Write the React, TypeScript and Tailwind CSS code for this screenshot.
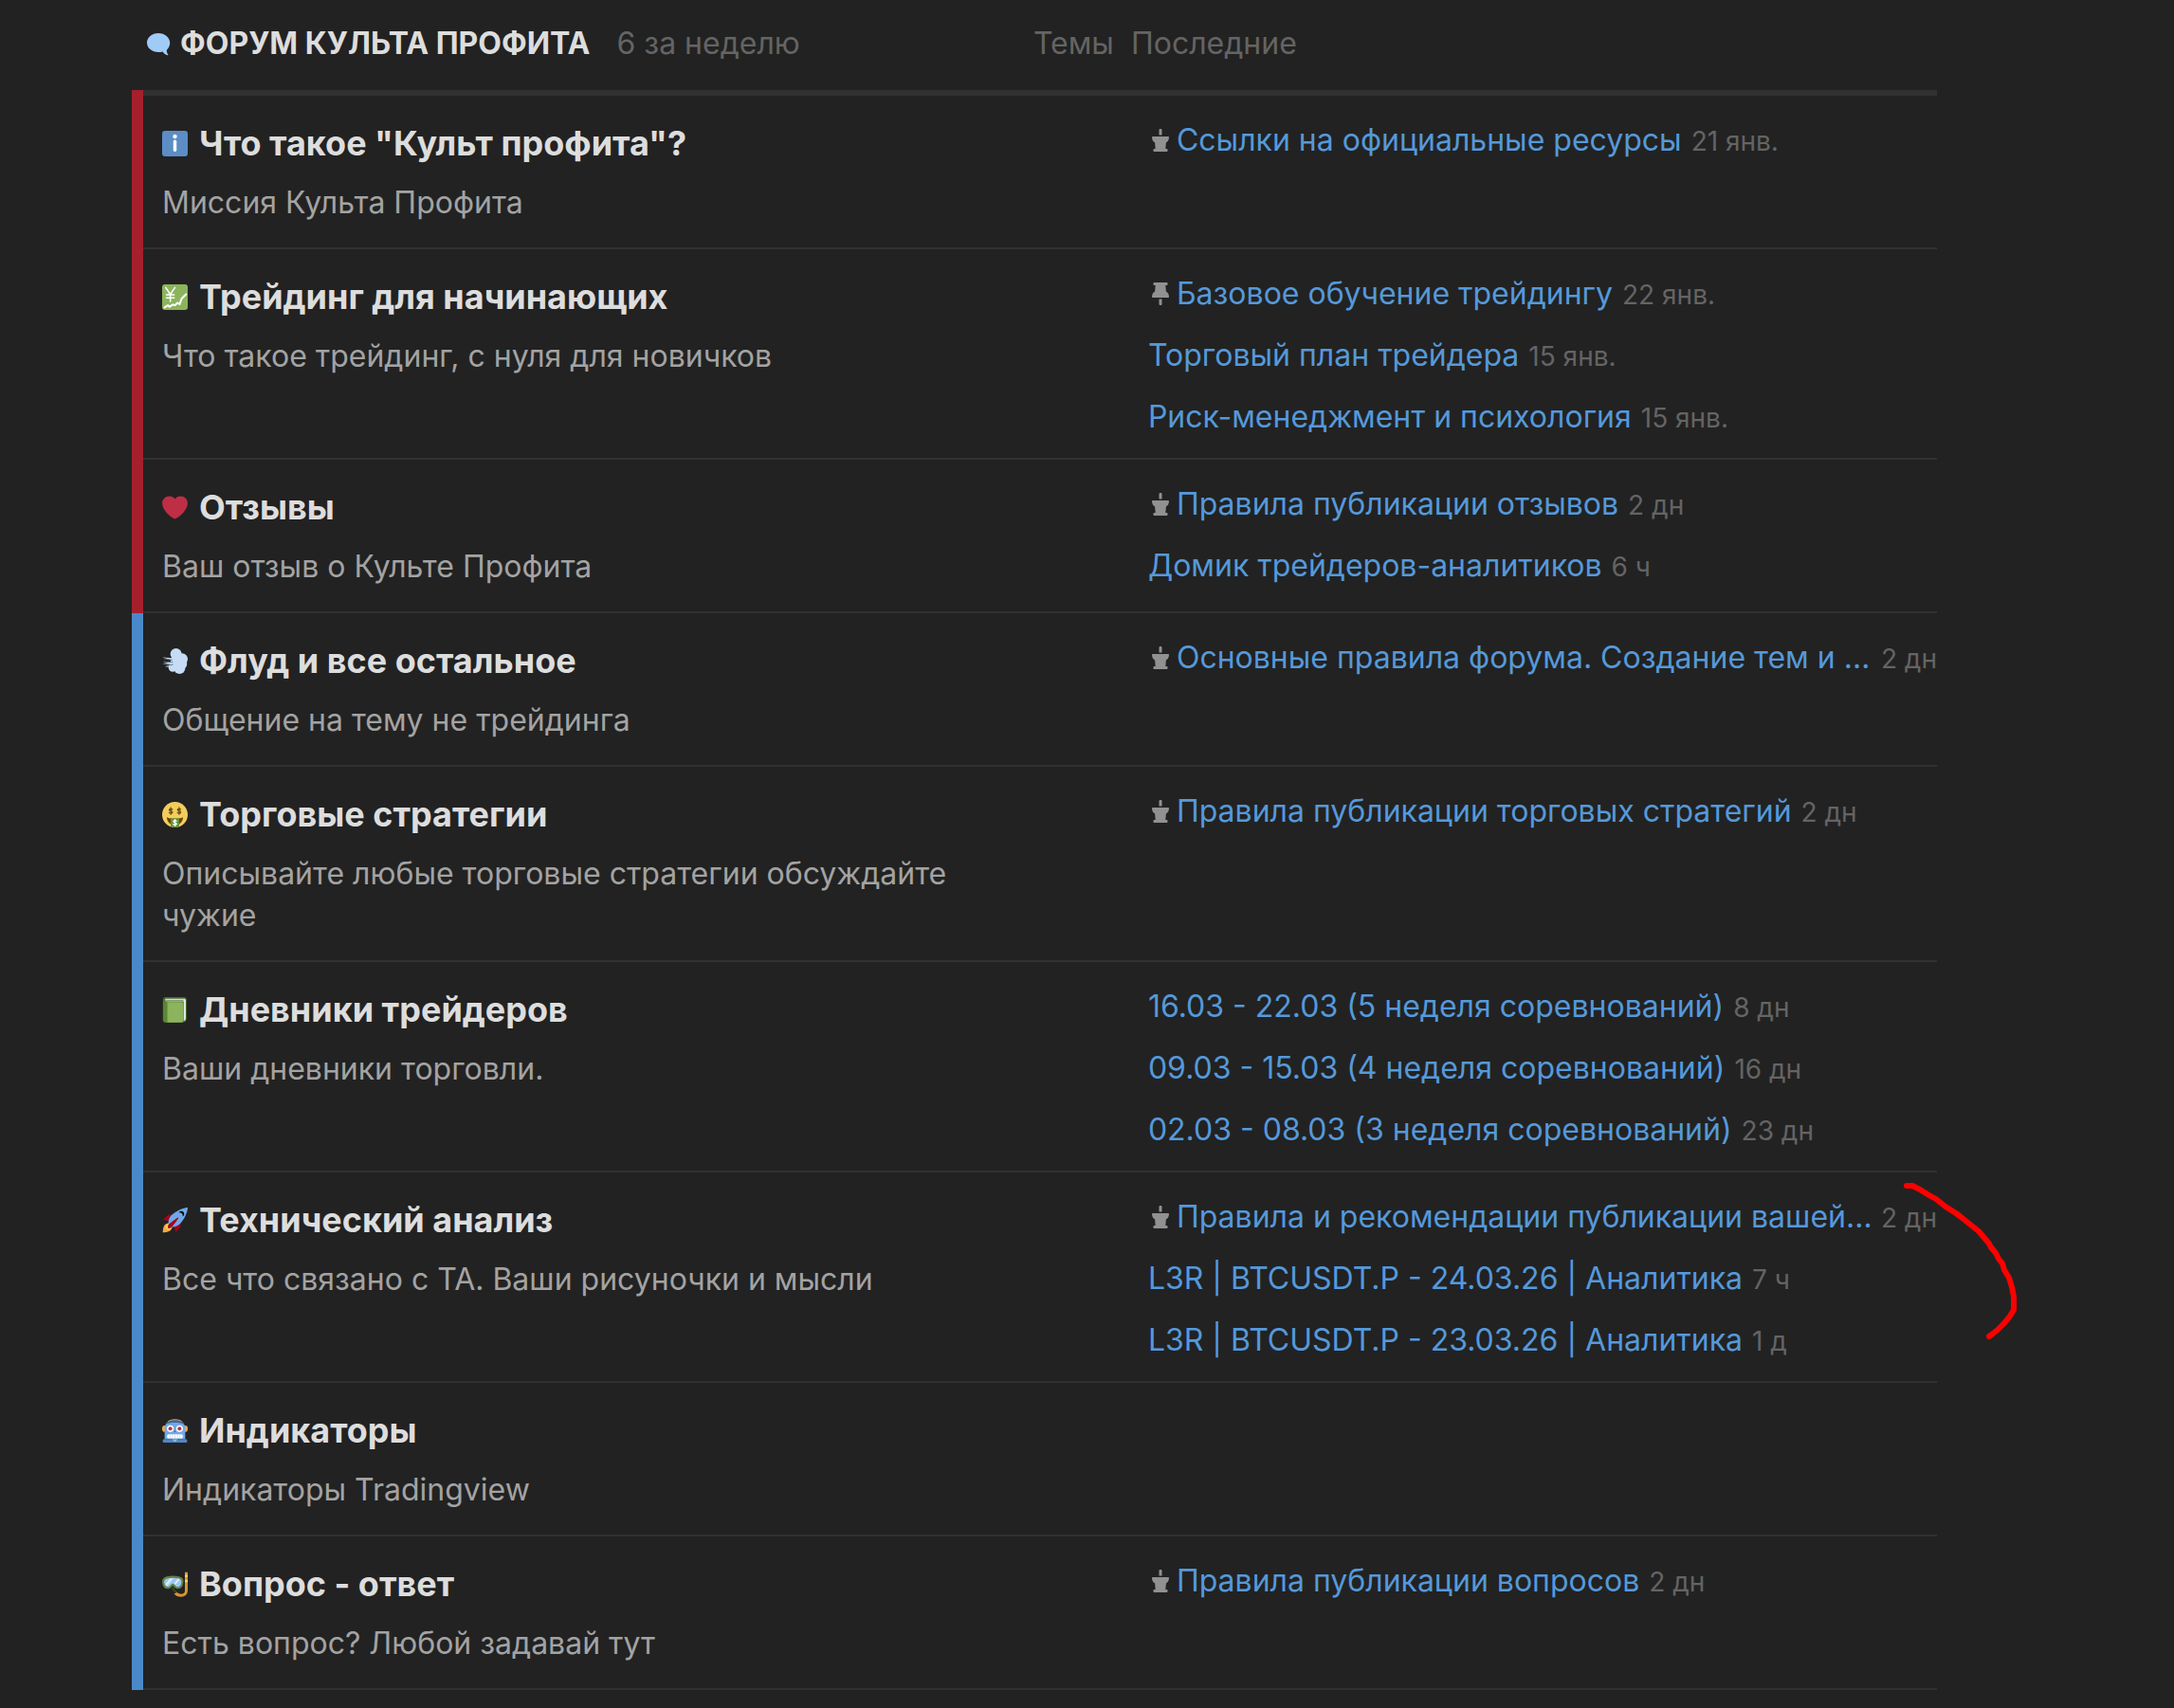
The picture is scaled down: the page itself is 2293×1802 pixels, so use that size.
import type { ReactNode } from "react";

type Topic = { title: string; date: string; pin?: "up" | "down"; clipped?: boolean };
type Category = {
  name: string;
  icon: ReactNode;
  description: string;
  topics: Topic[];
  marked?: boolean;
};
type Group = { color: string; categories: Category[] };

function Emoji({ children }: { children: ReactNode }) {
  return (
    <svg viewBox="0 0 36 36" className="size-[27px] shrink-0" aria-hidden="true">
      {children}
    </svg>
  );
}

const bubble = (
  <Emoji>
    <path
      fill="#9fcbf6"
      d="M16 2.500C7 2.500 0 8.500 0 16s7 13.300 16 13.300c2 0 4-.3 5.800-.8 2 2.600 4.400 4.400 7.200 5.200.8.200 1.200-.6.700-1.200-1.400-1.900-2-4-1.900-6.300C30.800 23.700 32.300 20 32.300 16 32.300 8.500 25 2.500 16 2.500z"
    />
  </Emoji>
);

const info = (
  <Emoji>
    <rect width="36" height="36" rx="4" fill="#5c8dc5" />
    <circle cx="18" cy="8" r="2.900" fill="#fff" />
    <rect x="15.700" y="12.800" width="4.600" height="16.500" rx="2.200" fill="#fff" />
  </Emoji>
);

const yenChart = (
  <Emoji>
    <rect width="36" height="36" rx="4" fill="#8cb45c" />
    <g fill="none" stroke="#fff" strokeLinecap="round" strokeLinejoin="round">
      <path strokeWidth="2" d="M5 4.500 11.500 14 18 4.500M11.500 14v10M6 14.500h11M6 19h11" />
      <path strokeWidth="2.800" d="M3.500 32.500 8 29.500l2.500 2 4.500-3 3 1 3.500-3.500 3 2 3-8 6-6" />
    </g>
  </Emoji>
);

const heart = (
  <Emoji>
    <path
      fill="#be2f45"
      d="M35.885 11.833c0-5.450-4.418-9.868-9.867-9.868-3.308 0-6.227 1.633-8.018 4.129-1.791-2.496-4.710-4.129-8.017-4.129-5.450 0-9.868 4.417-9.868 9.868 0 .772.098 1.520.266 2.241C1.751 22.587 11.216 31.568 18 34.034c6.783-2.466 16.249-11.447 17.617-19.959.170-.721.268-1.469.268-2.242z"
    />
  </Emoji>
);

const puff = (
  <Emoji>
    <g fill="#c5dcf4">
      <circle cx="19.500" cy="8" r="8" />
      <circle cx="28" cy="15" r="8" />
      <circle cx="24.500" cy="28" r="8" />
      <circle cx="15" cy="27" r="6" />
      <circle cx="20" cy="18" r="8" />
      <circle cx="28" cy="22" r="7" />
      <path d="M.3 12.500l14 1v3.500zM.5 21.500 14 18.500v4zM4 25.500l10-3v4z" />
    </g>
    <g fill="none" stroke="#66788a" strokeWidth="1.200" strokeLinecap="round">
      <path d="M3 14.500 14 16.500M2.500 19l12 .500M6 24.500l9-1.500" />
    </g>
  </Emoji>
);

const moneyFace = (
  <Emoji>
    <circle cx="18" cy="18" r="18" fill="#f3cd5c" />
    <path fill="#664500" d="M6.500 21.500C10 23 14 23.500 18 23.500s8-.5 11.500-2c-.5 6-5 11.500-11.500 11.500S7 27.500 6.500 21.500z" />
    <path fill="#68903f" d="M12 23h12v10.500c0 1.300-3 2.500-6 2.500s-6-1.200-6-2.500z" />
    <g fill="none" strokeLinecap="round">
      <g stroke="#6b4a0c" strokeWidth="1.700">
        <path d="M14.300 10.500c-.6-1-4.300-1.300-4.300.8s4.500 1.200 4.500 3.200-3.900 1.900-4.700.5M12.200 8v9.500" />
        <path d="M26 10.500c-.6-1-4.300-1.300-4.300.8s4.500 1.200 4.500 3.200-3.900 1.900-4.700.5M23.900 8v9.500" />
      </g>
      <path
        stroke="#fff"
        strokeWidth="1.700"
        d="M20.200 27c-.6-1-4.300-1.300-4.300.8s4.500 1.200 4.500 3.200-3.900 1.900-4.700.5M18.100 24.800v9"
      />
    </g>
  </Emoji>
);

const greenBook = (
  <Emoji>
    <path fill="#4a6e28" d="M5 0h25.500c2.500 0 4 1.500 4 4v26c0 3-2 5.500-5 5.500H5c-2.500 0-4-1.500-4-4V4c0-2.500 1.500-4 4-4z" />
    <path fill="#dfe6ea" d="M5 2.200h26c1.500 0 2.300.8 2.300 2.300v25c0 2-1 3.500-3 4V6H6.500c-2.500 0-2.500-3.800-1.500-3.800z" />
    <path fill="#4a6e28" d="M5 3.800h25v1.500H5z" opacity=".6" />
    <path fill="#8cb45c" d="M7 7h20c1.800 0 2.800 1 2.800 2.800v23c0 1.700-1 2.700-2.800 2.700H7z" />
    <path fill="#5b8636" d="M1.500 5c.8 1.300 2.500 2 5.500 2v28.500H5c-2.200 0-3.500-1.400-3.500-3.500z" />
  </Emoji>
);

const rocket = (
  <Emoji>
    <path fill="#a0041e" d="M1 17l8-7 16 1 1 16-7 8s.001-5.999-6-12-12-6-12-6z" />
    <path fill="#f4aa41" d="M.973 35s-.036-7.979 2.985-11S15 21.187 15 21.187 14.999 29 11.999 32c-3 3-11.026 3-11.026 3z" />
    <circle cx="8.999" cy="27" r="4" fill="#fccc58" />
    <path fill="#6fa9ea" d="M35.999 0s-10 0-22 10c-6 5-6 14-4 16s11 2 16-4c10-12 10-22 10-22z" />
    <path d="M26.999 5c-1.623 0-3.013.971-3.641 2.360.502-.227 1.055-.360 1.641-.360 2.209 0 4 1.791 4 4 0 .586-.133 1.139-.359 1.640 1.389-.627 2.359-2.017 2.359-3.640 0-2.209-1.791-4-4-4z" />
    <path fill="#a0041e" d="M8 28.999s0-4 1-5 13.001-10.999 14-10-9.001 13-10.001 14S8 28.999 8 28.999z" />
  </Emoji>
);

const robot = (
  <Emoji>
    <ellipse cx="3" cy="15" rx="3" ry="4.500" fill="#f4aa41" />
    <ellipse cx="33" cy="15" rx="3" ry="4.500" fill="#f4aa41" />
    <path fill="#f4aa41" d="M7 6C9 3 13 1.800 18 1.800S27 3 29 6z" />
    <path fill="#6fa9ea" d="M3.500 14C3.500 8 9 3.500 18 3.500S32.500 8 32.500 14v16h-29z" />
    <path fill="#42699b" d="M8 5.200C11 3.600 14 3 18 3s7 .6 10 2.200c1.800 1 3 2.300 3.500 3.800C28 7.300 23 6.500 18 6.500S8 7.300 4.500 9C5 7.500 6.200 6.200 8 5.200z" />
    <rect x="1" y="30" width="34" height="4.500" rx="1" fill="#5585bf" />
    <circle cx="11.500" cy="15" r="4.700" fill="#fff" />
    <circle cx="24.500" cy="15" r="4.700" fill="#fff" />
    <circle cx="11.500" cy="15" r="2.700" fill="#be2f45" />
    <circle cx="24.500" cy="15" r="2.700" fill="#be2f45" />
    <path fill="#3f6fa9" d="M18 17l1.500 3h-3z" />
    <rect x="7" y="23" width="22" height="5.500" rx="2" fill="#fff" />
    <path stroke="#b9c6d4" strokeWidth=".8" d="M11 23v5.500M14.500 23v5.500M18 23v5.500M21.500 23v5.500M25 23v5.500" />
    <path fill="#8ebef2" d="M14 30h8l-4 3.500z" />
  </Emoji>
);

const mask = (
  <Emoji>
    <path fill="none" stroke="#d9952f" strokeWidth="4" d="M34 1v26c0 4-3 6.500-7.500 6.500-3.500 0-6-1-8-3.500" />
    <path stroke="#fad35f" strokeWidth="4" d="M34 4.500v3M34 11.500v3.500" />
    <path
      fill="#9cc6f2"
      stroke="#5f8443"
      strokeWidth="2.800"
      strokeLinejoin="round"
      d="M7 8.500C12 7.300 18 7.300 23.500 8.500c3.500.8 5.500 3.500 5 7-.5 4.500-3 7.500-7 7.500-3.500 0-4.200-4.500-6.500-4.500S12 23 8.500 23c-4 0-6.500-3-7-7.500-.4-3.500 2-6.200 5.500-7z"
    />
    <path fill="#d9ebfc" d="M11 9.800l4.500-.2-8 10.500-3-2zM22 10l3 .5-6 8-2-2z" />
    <path fill="#344426" d="M13 24l2.500-3 3 5.500 3 1-2 3c-3-1.500-5-3.500-6.500-6.500z" />
  </Emoji>
);

const groups: Group[] = [
  {
    color: "bg-[#a51f2d]",
    categories: [
      {
        name: 'Что такое "Культ профита"?',
        icon: info,
        description: "Миссия Культа Профита",
        topics: [{ title: "Ссылки на официальные ресурсы", date: "21 янв.", pin: "up" }],
      },
      {
        name: "Трейдинг для начинающих",
        icon: yenChart,
        description: "Что такое трейдинг, с нуля для новичков",
        topics: [
          { title: "Базовое обучение трейдингу", date: "22 янв.", pin: "down" },
          { title: "Торговый план трейдера", date: "15 янв." },
          { title: "Риск-менеджмент и психология", date: "15 янв." },
        ],
      },
      {
        name: "Отзывы",
        icon: heart,
        description: "Ваш отзыв о Культе Профита",
        topics: [
          { title: "Правила публикации отзывов", date: "2 дн", pin: "up" },
          { title: "Домик трейдеров-аналитиков", date: "6 ч" },
        ],
      },
    ],
  },
  {
    color: "bg-[#4a89c9]",
    categories: [
      {
        name: "Флуд и все остальное",
        icon: puff,
        description: "Общение на тему не трейдинга",
        topics: [{ title: "Основные правила форума. Создание тем и …", date: "2 дн", pin: "up", clipped: true }],
      },
      {
        name: "Торговые стратегии",
        icon: moneyFace,
        description: "Описывайте любые торговые стратегии обсуждайте чужие",
        topics: [{ title: "Правила публикации торговых стратегий", date: "2 дн", pin: "up" }],
      },
      {
        name: "Дневники трейдеров",
        icon: greenBook,
        description: "Ваши дневники торговли.",
        topics: [
          { title: "16.03 - 22.03 (5 неделя соревнований)", date: "8 дн" },
          { title: "09.03 - 15.03 (4 неделя соревнований)", date: "16 дн" },
          { title: "02.03 - 08.03 (3 неделя соревнований)", date: "23 дн" },
        ],
      },
      {
        name: "Технический анализ",
        icon: rocket,
        description: "Все что связано с ТА. Ваши рисуночки и мысли",
        marked: true,
        topics: [
          { title: "Правила и рекомендации публикации вашей…", date: "2 дн", pin: "up", clipped: true },
          { title: "L3R | BTCUSDT.P - 24.03.26 | Аналитика", date: "7 ч" },
          { title: "L3R | BTCUSDT.P - 23.03.26 | Аналитика", date: "1 д" },
        ],
      },
      {
        name: "Индикаторы",
        icon: robot,
        description: "Индикаторы Tradingview",
        topics: [],
      },
      {
        name: "Вопрос - ответ",
        icon: mask,
        description: "Есть вопрос? Любой задавай тут",
        topics: [{ title: "Правила публикации вопросов", date: "2 дн", pin: "up" }],
      },
    ],
  },
];

function Pin({ flipped }: { flipped: boolean }) {
  return (
    <svg
      viewBox="0 0 18 24"
      className={flipped ? "mr-2 ml-1 h-6 w-[18px] shrink-0 rotate-180" : "mr-2 ml-1 h-6 w-[18px] shrink-0"}
      aria-hidden="true"
    >
      <path
        fill="#919191"
        d="M2.500 0h13c.7 0 1 .5 1 1v1c0 .6-.4 1-1 1h-1.200l.6 6.500c1.800 1 3 2.800 3.100 5.500 0 .6-.4 1-1 1H1c-.6 0-1-.4-1-1 .1-2.700 1.300-4.500 3.100-5.500L3.700 3H2.500c-.6 0-1-.4-1-1V1c0-.5.3-1 1-1zM7.500 17.500h3V23c0 .5-.5 1-1.500 1s-1.500-.5-1.500-1z"
      />
    </svg>
  );
}

function TopicLine({ topic }: { topic: Topic }) {
  return (
    <li className="flex h-[65px] items-start whitespace-nowrap">
      <span className="flex h-11 items-center">{topic.pin && <Pin flipped={topic.pin === "up"} />}</span>
      <span className={topic.clipped ? "flex grow items-baseline justify-between" : "flex items-baseline gap-2.5"}>
        <a href="#" className="text-[32px] leading-11 text-[#5599da]">
          {topic.title}
        </a>
        <span className="text-[28px] leading-11 text-[#646464]">{topic.date}</span>
      </span>
    </li>
  );
}

function Stroke() {
  return (
    <svg
      viewBox="2003 1243 130 176"
      className="pointer-events-none absolute top-1.5 -right-[90px] h-44 w-[130px]"
      aria-hidden="true"
    >
      <path
        fill="none"
        stroke="#fe0000"
        strokeWidth="6"
        strokeLinecap="round"
        strokeLinejoin="round"
        d="M2011 1251L2017 1251 2025 1255 2033 1260 2042 1265 2052 1273 2063 1280 2067 1283 2077 1291 2087 1299 2098 1312 2100 1316 2105 1322 2108 1328 2112 1333 2114 1340 2119 1348 2122 1358 2124 1368 2124 1382 2119 1390 2113 1397 2107 1403 2102 1407 2098 1410"
      />
    </svg>
  );
}

export default function App() {
  return (
    <main className="min-h-screen bg-[#222222] pr-[250px] pl-[139px] font-['Inter',sans-serif]">
      <table className="w-full table-fixed border-separate border-spacing-0 text-left">
        <colgroup>
          <col className="w-3" />
          <col className="w-[48%]" />
          <col className="w-32" />
          <col />
        </colgroup>
        <thead>
          <tr className="align-top text-[32px] leading-11 text-[#646464]">
            <th colSpan={2} className="pt-6 pb-[27px] pl-4 font-normal">
              <h2 className="flex items-center">
                {bubble}
                <span className="ml-2 font-bold text-[#dddddd]">ФОРУМ КУЛЬТА ПРОФИТА</span>
                <span className="ml-7">6 за неделю</span>
              </h2>
            </th>
            <th className="pt-6 pr-[18px] text-right font-normal">Темы</th>
            <th className="pt-6 font-normal">Последние</th>
          </tr>
        </thead>
        {groups.map((group, g) => (
          <tbody key={group.color}>
            {group.categories.map((category, c) => {
              const border =
                g === 0 && c === 0 ? "border-t-6 border-b-2 border-[#313131]" : "border-b-2 border-[#313131]";
              return (
                <tr key={category.name} className="align-top">
                  {c === 0 && <td rowSpan={group.categories.length} className={group.color} />}
                  <td className={border}>
                    <div className="pt-[25px] pr-16 pb-[25px] pl-5">
                      <h3>
                        <a
                          href="#"
                          className="flex items-center gap-3 text-[36px] leading-[50px] font-bold text-[#dddddd]"
                        >
                          {category.icon}
                          {category.name}
                        </a>
                      </h3>
                      <p className="mt-4 text-[32px] leading-11 text-[#a3a3a3]">{category.description}</p>
                    </div>
                  </td>
                  <td className={border} />
                  <td className={border}>
                    <div className="relative pt-[25px] pl-[18px]">
                      <ul>
                        {category.topics.map((topic) => (
                          <TopicLine key={topic.title} topic={topic} />
                        ))}
                      </ul>
                      {category.marked && <Stroke />}
                    </div>
                  </td>
                </tr>
              );
            })}
          </tbody>
        ))}
      </table>
    </main>
  );
}
